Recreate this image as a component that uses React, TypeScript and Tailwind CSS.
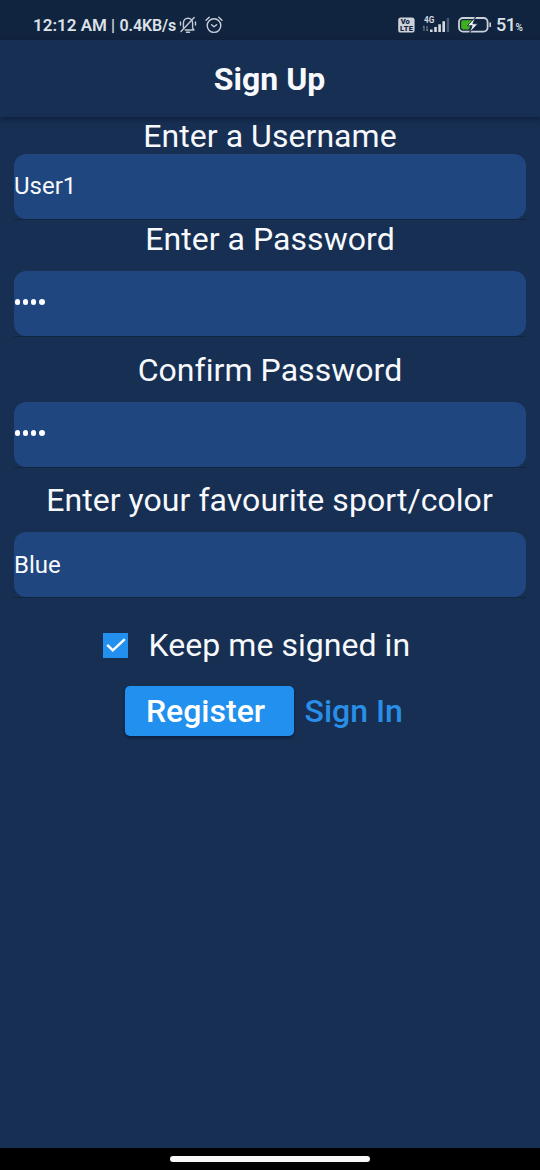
import type { ReactNode } from "react";

function MutedBell() {
  return (
    <svg width="18" height="18" viewBox="0 0 18 18" fill="none" stroke="#c3cad4" strokeWidth="1.4" strokeLinecap="round" strokeLinejoin="round">
      <path d="M4.4 11.6V7.2C4.4 4.2 6.4 2.2 9 2.2s4.6 2 4.6 5v4.9l1.4 1.9H6.2" />
      <path d="M7.4 16.2h3.2M1.5 6v3M16.5 6v3M15.2 1.6 2 15.6" />
    </svg>
  );
}

function AlarmClock() {
  return (
    <svg width="18" height="18" viewBox="0 0 18 18" fill="none" stroke="#c9d0da" strokeWidth="1.4" strokeLinecap="round" strokeLinejoin="round">
      <circle cx="9" cy="9.6" r="6.8" />
      <path d="M6.6 8.8 9 10.8l2.6-2M1 4.2l3.2-2.9M17 4.2l-3.2-2.9" />
    </svg>
  );
}

function VoLte() {
  return (
    <svg width="17" height="16" viewBox="0 0 17 16">
      <rect x="0.2" y="0.4" width="16.4" height="15.2" rx="2.6" fill="#ccd2da" />
      <text x="2.8" y="7.4" fontSize="7.5" fontWeight="900" fill="#11243f">Vo</text>
      <text x="2" y="14.2" fontSize="7.5" fontWeight="900" textLength="13" fill="#11243f">LTE</text>
    </svg>
  );
}

function Signal() {
  return (
    <svg width="28" height="18" viewBox="0 0 28 18">
      <text x="2" y="6.8" fontSize="8.2" fontWeight="700" fill="#d5dae1">4G</text>
      <path d="M2 10v5M1 11.2 2 10M5 10v5M6 13.8 5 15" stroke="#8d99a9" strokeWidth="0.9" fill="none" />
      <path d="M8 13.4h2.6V16H8zM12.2 11h2.6v5h-2.6zM16.3 8.3h2.6V16h-2.6zM20.4 5.2H23V16h-2.6z" fill="#d5dae1" />
      <path d="M24.7 2h2.4v14h-2.4z" fill="#4b5c74" />
    </svg>
  );
}

function Battery() {
  return (
    <svg width="36" height="18" viewBox="0 0 36 18">
      <rect x="2" y="2" width="28.6" height="13.6" rx="4" fill="none" stroke="#cbd1d9" strokeWidth="1.8" />
      <path d="M6 4.3h9.4l-3.4 9.1H6a1.8 1.8 0 0 1-1.8-1.8V6.1A1.8 1.8 0 0 1 6 4.3z" fill="#3fae20" />
      <path d="m18.6 1-8.2 8.7h4.8l-2.8 7.1 8.4-9h-4.9z" fill="#f0f3f6" stroke="#11243f" strokeWidth="0.8" />
      <path d="M32.4 6.5H34v4.6h-1.6z" fill="#cbd1d9" />
    </svg>
  );
}

function StatusBar() {
  return (
    <header className="flex h-10 shrink-0 items-center bg-[#11243f] pt-[10px] pl-[33px] text-[#dde2e9]">
      <div className="flex w-[146px] items-baseline whitespace-nowrap font-semibold leading-[30px]">
        <span className="w-[78px] text-[17px]">12:12 AM</span>
        <span className="text-[16px] font-medium">|</span>
        <span className="pl-[4.5px] text-[16px] tracking-[-0.1px]">0.4KB/s</span>
      </div>
      <MutedBell />
      <span className="w-[8px]" />
      <AlarmClock />
      <span className="w-[175px]" />
      <VoLte />
      <span className="w-[7px]" />
      <Signal />
      <span className="w-[7px]" />
      <Battery />
      <span className="pl-[3px] text-[18px] font-medium leading-[30px] tracking-[-0.5px]">51</span>
      <span className="pt-[5px] text-[10px] font-medium">%</span>
    </header>
  );
}

function Label({ children }: { children: ReactNode }) {
  return <span className="whitespace-nowrap text-[32px] leading-[38px] tracking-[0.05px]">{children}</span>;
}

function Field({ children }: { children: ReactNode }) {
  return (
    <div className="mr-[14px] ml-[13.5px] h-[66px] border-b border-[#112440]">
      <div className="flex h-[65px] items-center rounded-[12px] bg-[#1f467e] pl-[0.5px] text-[24px] leading-[28px]">{children}</div>
    </div>
  );
}

function Dots() {
  return (
    <div className="flex gap-[2.8px] pb-[3px] pl-px">
      {[0, 1, 2, 3].map((i) => (
        <span key={i} className="size-[5.3px] rounded-full bg-white" />
      ))}
    </div>
  );
}

export default function App() {
  return (
    <div className="flex h-[1170px] w-[540px] flex-col overflow-hidden bg-[#162f53] font-['Roboto',sans-serif] text-[#f7f9fc]">
      <StatusBar />
      <div className="flex h-[77px] shrink-0 items-center justify-center bg-[#162f53] pr-px shadow-[0_2px_5px_rgba(5,12,28,0.5)]">
        <h1 className="text-[32px] font-bold leading-[38px]">Sign Up</h1>
      </div>
      <main className="flex grow flex-col">
        <div className="flex h-[37px] items-center justify-center"><Label>Enter a Username</Label></div>
        <Field><span className="pb-px">User1</span></Field>
        <div className="flex h-[51px] items-center justify-center pb-[14px]"><Label>Enter a Password</Label></div>
        <Field><Dots /></Field>
        <div className="flex h-[65px] items-center justify-center"><Label>Confirm Password</Label></div>
        <Field><Dots /></Field>
        <div className="flex h-[64px] items-center justify-center pr-px pb-px"><Label>Enter your favourite sport/color</Label></div>
        <Field>Blue</Field>
        <div className="flex h-[94px] items-center pl-[103px]">
          <span className="flex size-[25px] items-center justify-center bg-[#2190ee]">
            <svg width="20" height="15" viewBox="0 0 20 15" fill="none" stroke="white" strokeWidth="2.4">
              <path d="m1.2 6.8 5.6 5.6L18.8 1.2" />
            </svg>
          </span>
          <span className="pl-[20.5px]"><Label>Keep me signed in</Label></span>
        </div>
        <div className="-mt-[6px] flex h-[50px] items-center pl-[125px] text-[32px] font-medium leading-[38px]">
          <button className="h-[50px] w-[169px] rounded-[5px] bg-[#2190ee] pr-[8px] font-medium text-white shadow-[0_2px_3px_rgba(5,12,28,0.45)]">Register</button>
          <button className="pl-[10.5px] font-medium text-[#298ee6]">Sign In</button>
        </div>
      </main>
      <footer className="flex h-[22px] shrink-0 items-center justify-center bg-black">
        <div className="h-[6px] w-[200px] rounded-full bg-[#f8f8f8]" />
      </footer>
    </div>
  );
}
